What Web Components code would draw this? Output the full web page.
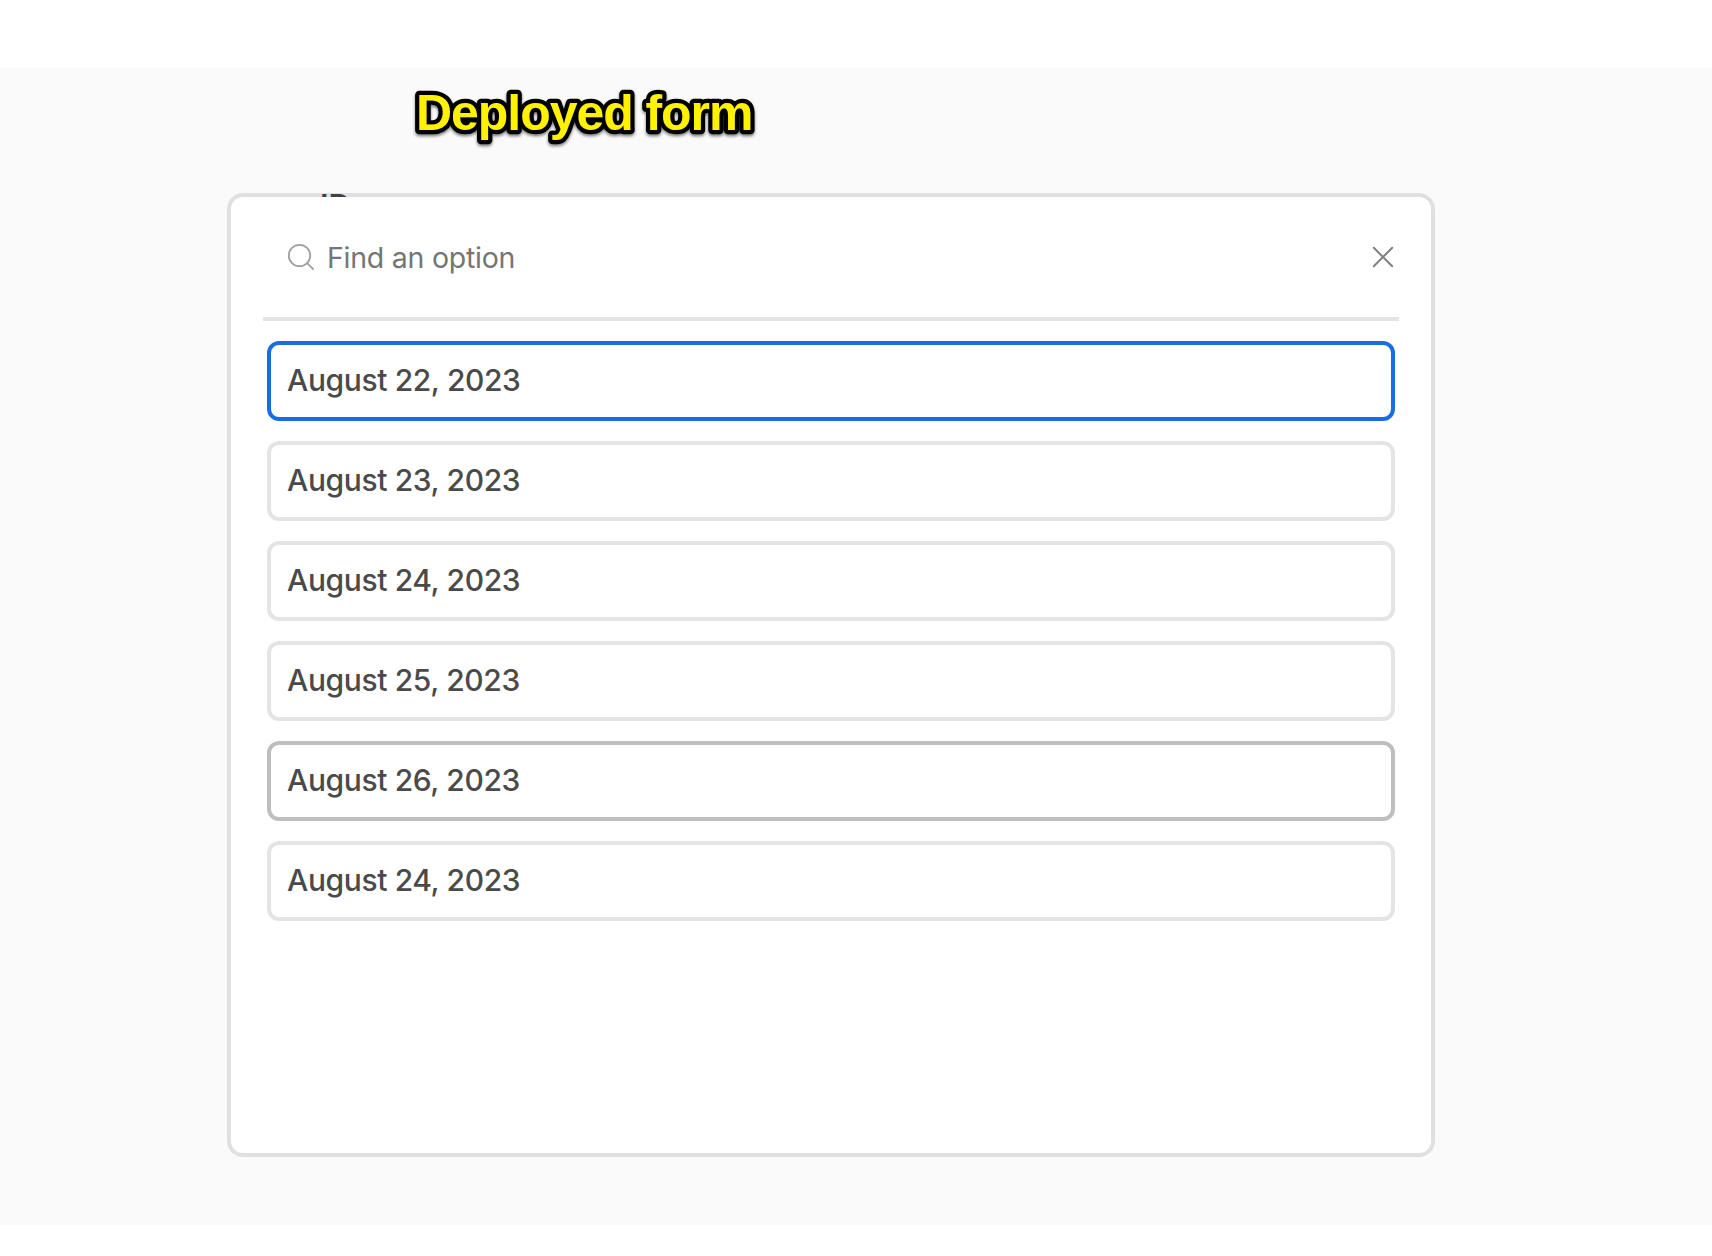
<!DOCTYPE html>
<html lang="en">
<head>
<meta charset="utf-8">
<title>Deployed form</title>
<style>
  body {
    margin: 0;
    background: #fff;
    font-family: Inter, "Liberation Sans", sans-serif;
  }
</style>
</head>
<body>
<form-page>
  <form-caption slot="caption" text="Deployed form"></form-caption>
  <field-label slot="field">ID</field-label>
  <option-picker placeholder="Find an option">
    <option-item state="selected">August 22, 2023</option-item>
    <option-item>August 23, 2023</option-item>
    <option-item>August 24, 2023</option-item>
    <option-item>August 25, 2023</option-item>
    <option-item state="hover">August 26, 2023</option-item>
    <option-item>August 24, 2023</option-item>
  </option-picker>
</form-page>

<script>
const define = (name, html, init) => {
  const template = document.createElement('template');
  template.innerHTML = html;

  customElements.define(name, class extends HTMLElement {
    constructor() {
      super();
      this.attachShadow({ mode: 'open' });
      this.shadowRoot.appendChild(template.content.cloneNode(true));
    }

    connectedCallback() {
      if (init) init(this);
    }
  });
};

define('form-page', `
<style>
  :host {
    display: block;
    box-sizing: border-box;
    height: 1256px;
    padding: 68px 0 31px;
  }

  .page {
    box-sizing: border-box;
    height: 1157px;
    padding-left: 227px;
    background: #fafafa;
  }

  .caption {
    height: 125px;
    box-sizing: border-box;
    padding: 12px 0 0 179px;
  }

  /* the picker opens over the field, in the same cell */
  .stack {
    display: grid;
    width: 1208px;
    height: 964px;
  }

  .stack > * {
    grid-area: 1 / 1;
    min-width: 0;
    min-height: 0;
  }

  .field {
    padding-left: 93px;
  }

  .picker {
    z-index: 1;
    display: grid;
  }
</style>
<div class="page">
  <div class="caption"><slot name="caption"></slot></div>
  <div class="stack">
    <div class="field"><slot name="field"></slot></div>
    <div class="picker"><slot></slot></div>
  </div>
</div>
`);

define('form-caption', `
<style>
  :host {
    display: block;
  }

  svg {
    display: block;
    filter: drop-shadow(0 2px 1.5px rgba(0, 0, 0, .5));
  }

  text {
    font: bold 50px "Liberation Sans", Arial, sans-serif;
    letter-spacing: -1.05px;
    fill: #fff200;
    stroke: #000;
    stroke-width: 8.5px;
    stroke-linejoin: round;
    paint-order: stroke fill;
  }
</style>
<svg width="380" height="76"><text x="10" y="50"></text></svg>
`, (el) => {
  el.shadowRoot.querySelector('text').textContent = el.getAttribute('text');
});

define('field-label', `
<style>
  :host {
    display: block;
    margin-top: -4px;
    font-size: 31px;
    line-height: 34px;
    font-weight: 600;
    color: #4a4a4a;
  }
</style>
<slot></slot>
`);

define('option-item', `
<style>
  :host {
    display: flex;
    align-items: center;
    box-sizing: border-box;
    height: 80px;
    padding: 0 16px 2px;
    border: 4px solid #e4e4e4;
    border-radius: 12px;
    background: #fff;
    color: #4a4a4a;
    font-size: 30px;
    line-height: 40px;
    font-weight: 500;
    letter-spacing: -.38px;
    white-space: nowrap;
  }

  :host([state="selected"]) {
    border-color: #186de5;
  }

  :host([state="hover"]) {
    border-color: #bebebe;
  }
</style>
<slot></slot>
`);

define('option-picker', `
<style>
  :host {
    display: flex;
    flex-direction: column;
    box-sizing: border-box;
    padding: 0 32px;
    border: 4px solid rgba(0, 0, 0, .1);
    border-radius: 16px;
    background: #fff;
    background-clip: padding-box;
  }

  .search {
    display: flex;
    align-items: center;
    box-sizing: border-box;
    height: 124px;
    padding: 0 4px 0 24px;
    border-bottom: 4px solid #e4e4e4;
  }

  .search svg {
    flex: none;
    fill: none;
    stroke-linecap: round;
  }

  .placeholder {
    flex: auto;
    margin-left: 12px;
    padding-top: 2px;
    color: #757575;
    font-size: 28.5px;
    line-height: 40px;
    letter-spacing: -.25px;
  }

  .options {
    display: flex;
    flex-direction: column;
    gap: 20px;
    padding: 20px 4px;
  }
</style>
<div class="search">
  <svg width="28" height="28" viewBox="0 0 28 28" stroke="#a0a0a0" stroke-width="1.8">
    <circle cx="12.5" cy="12.5" r="10.7"/>
    <path d="M20.2 20.2l6 6"/>
  </svg>
  <span class="placeholder"></span>
  <svg width="24" height="24" viewBox="0 0 24 24" stroke="#808080" stroke-width="2">
    <path d="M2.8 2.8l18.4 18.4M21.2 2.8l-18.4 18.4"/>
  </svg>
</div>
<div class="options"><slot></slot></div>
`, (el) => {
  el.shadowRoot.querySelector('.placeholder').innerText = el.getAttribute('placeholder');
});
</script>
</body>
</html>
